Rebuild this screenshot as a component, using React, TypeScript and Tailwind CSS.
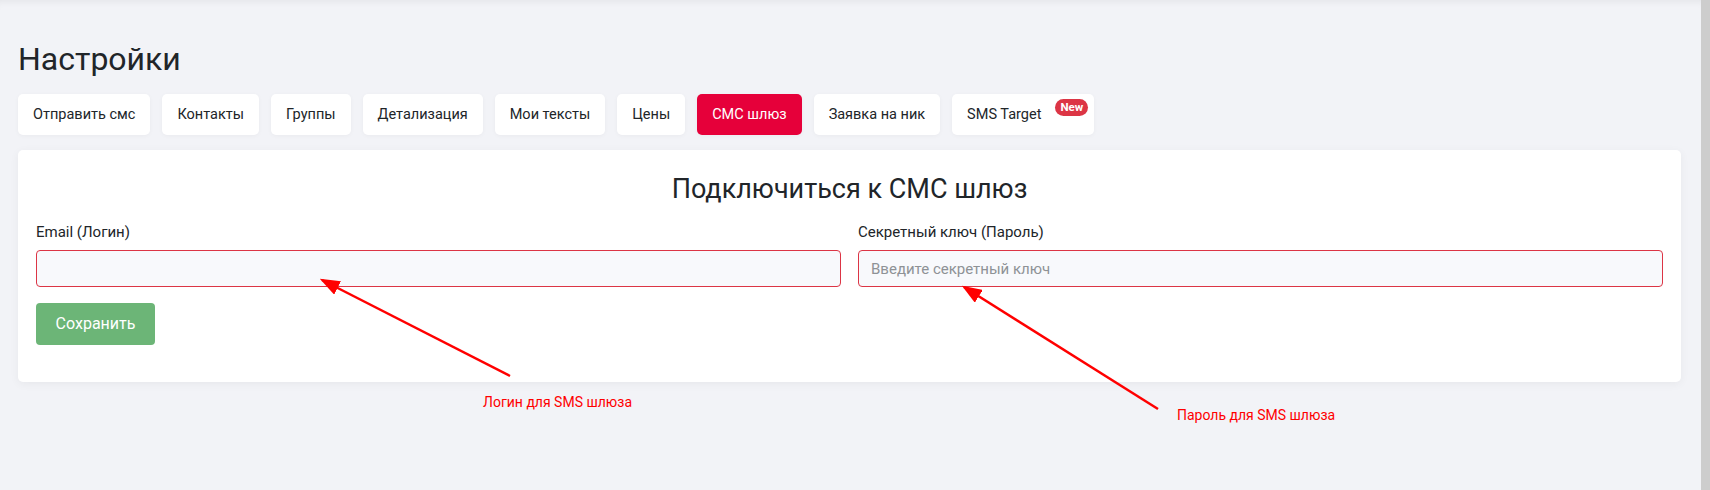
import { useState } from "react";

const tabs = [
  "Отправить смс",
  "Контакты",
  "Группы",
  "Детализация",
  "Мои тексты",
  "Цены",
  "СМС шлюз",
  "Заявка на ник",
  "SMS Target",
];

const font = "font-['Segoe_UI',Roboto,'Noto_Sans',sans-serif]";

const App = () => {
  const [active] = useState("СМС шлюз");
  const [email, setEmail] = useState("");
  const [secret, setSecret] = useState("");

  return (
    <div className={`min-h-screen flex bg-[#f2f3f7] text-[#212529] ${font}`}>
      <main className="relative flex-1 px-[18px] pt-[40px] shadow-[inset_0_7px_7px_-5px_rgba(0,0,0,0.06)]">
        <h1 className="text-[32px] leading-[38px] font-normal">Настройки</h1>

        {/* Tabs */}
        <div className="mt-[16px] flex gap-[12px]">
          {tabs.map((tab) => (
            <button
              key={tab}
              className={`h-[41px] flex items-center rounded-[5px] text-[14.5px] shadow-[0_1px_4px_rgba(0,0,0,0.04)] ${
                tab === "SMS Target" ? "pl-[15px] pr-[6px]" : "px-[15px]"
              } ${tab === active ? "bg-[#e6003a] text-white" : "bg-white text-[#212529]"}`}
            >
              {tab}
              {tab === "SMS Target" && (
                <span className="ml-[14px] -mt-[14px] h-[17px] px-[5px] rounded-full bg-[#dc3545] text-white text-[11.5px] font-bold leading-[17px]">
                  New
                </span>
              )}
            </button>
          ))}
        </div>

        {/* Card */}
        <div className="mt-[15px] mr-[2px] bg-white rounded-[5px] shadow-[0_2px_10px_rgba(0,0,0,0.05)] px-[18px] pt-[22px] pb-[37px]">
          <h3 className="text-center text-[27px] leading-[34px] font-normal">Подключиться к СМС шлюз</h3>

          <div className="mt-[15px] grid grid-cols-2 gap-x-[17px]">
            <div className="flex flex-col">
              <label className="text-[15px] leading-[22px]">Email (Логин)</label>
              <input
                value={email}
                onChange={(e) => setEmail(e.target.value)}
                className="mt-[7px] h-[37px] px-3 rounded-[4px] border border-[#dc3545] bg-[#f8f9fc] text-[15px] outline-none"
              />
            </div>
            <div className="flex flex-col">
              <label className="text-[15px] leading-[22px]">Секретный ключ (Пароль)</label>
              <input
                value={secret}
                onChange={(e) => setSecret(e.target.value)}
                placeholder="Введите секретный ключ"
                className="mt-[7px] h-[37px] px-3 rounded-[4px] border border-[#dc3545] bg-[#f8f9fc] text-[15px] outline-none placeholder:text-[#8e9296]"
              />
            </div>
          </div>

          <button className="mt-[16px] h-[42px] w-[119px] rounded-[4px] bg-[#6cb577] text-white text-[16px]">
            Сохранить
          </button>
        </div>

        {/* Annotations */}
        <svg className="absolute inset-0 w-full h-full pointer-events-none" xmlns="http://www.w3.org/2000/svg">
          <defs>
            <marker id="head" markerWidth="8" markerHeight="6" refX="7" refY="3" orient="auto" markerUnits="strokeWidth">
              <path d="M0,0 L8,3 L0,6 Z" fill="#ff0000" />
            </marker>
          </defs>
          <line x1="510" y1="376" x2="322" y2="280" stroke="#ff0000" strokeWidth="2.5" markerEnd="url(#head)" />
          <line x1="1158" y1="409" x2="964" y2="287" stroke="#ff0000" strokeWidth="2.5" markerEnd="url(#head)" />
        </svg>
        <span className="absolute left-[483px] top-[393px] text-[14px] leading-[19px] text-[#ff0000]">Логин для SMS шлюза</span>
        <span className="absolute left-[1177px] top-[406px] text-[14px] leading-[19px] text-[#ff0000]">Пароль для SMS шлюза</span>
      </main>
      <div className="w-[9px] bg-[#cdcdcd]" />
    </div>
  );
};

export default App;
